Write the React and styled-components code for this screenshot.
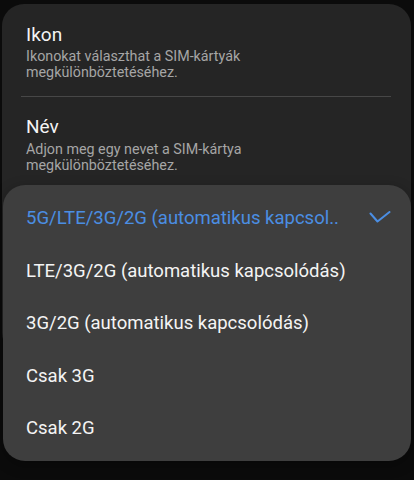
import React from 'react'
import styled, { createGlobalStyle } from 'styled-components'

const GlobalStyle = createGlobalStyle`
  html, body {
    margin: 0;
    padding: 0;
    background: #0b0b0b;
  }
  body {
    font-family: Roboto, "Noto Sans", sans-serif;
    -webkit-font-smoothing: antialiased;
  }
`

const Screen = styled.div`
  position: relative;
  width: 414px;
  height: 480px;
  overflow: hidden;
  padding-top: 4px;
  box-sizing: border-box;
`

const Card = styled.div`
  margin: 0 3px 0 2px;
  min-height: 351px;
  background: #252525;
  border-radius: 22px;
  box-sizing: border-box;
`

const Row = styled.div`
  padding: 18.5px 26px 15.5px 24px;
  display: flex;
  flex-direction: column;
  gap: 2.5px;
`

const Title = styled.div`
  color: #f4f4f4;
  font-size: 19px;
  line-height: 23px;
`

const Subtitle = styled.div`
  color: #a6a6a6;
  font-size: 14.3px;
  line-height: 16px;
`

const Divider = styled.div`
  height: 1px;
  margin: 0 20px 0 19px;
  background: #474747;
`

const Popup = styled.div`
  position: absolute;
  left: 3px;
  top: 185px;
  width: 408px;
  padding: 7px 0 6px;
  background: #3e3e3e;
  border-radius: 22px;
  box-sizing: border-box;
  box-shadow: 0 4px 14px rgba(0, 0, 0, 0.3);
`

const Option = styled.div`
  height: 52.5px;
  display: flex;
  align-items: center;
  justify-content: space-between;
  padding: 0 20px 0 23px;
  font-size: 18.5px;
  color: ${p => (p.selected ? '#4b8ee3' : '#f4f4f4')};
  white-space: nowrap;
`

const Check = styled.svg`
  width: 22px;
  height: 14px;
  flex: none;
`

const options = [
  '5G/LTE/3G/2G (automatikus kapcsol..',
  'LTE/3G/2G (automatikus kapcsolódás)',
  '3G/2G (automatikus kapcsolódás)',
  'Csak 3G',
  'Csak 2G',
]

export default function App() {
  return (
    <Screen>
      <GlobalStyle />
      <Card>
        <Row>
          <Title>Ikon</Title>
          <Subtitle>
            Ikonokat választhat a SIM-kártyák
            <br />
            megkülönböztetéséhez.
          </Subtitle>
        </Row>
        <Divider />
        <Row>
          <Title>Név</Title>
          <Subtitle>
            Adjon meg egy nevet a SIM-kártya
            <br />
            megkülönböztetéséhez.
          </Subtitle>
        </Row>
      </Card>
      <Popup>
        {options.map((o, i) => (
          <Option key={o} selected={i === 0}>
            <span>{o}</span>
            {i === 0 && (
              <Check viewBox="0 0 22 14">
                <path d="M1.5 2.5 L8.5 10.5 L20.5 1" fill="none" stroke="#4b8ee3" strokeWidth="2" strokeLinecap="round" strokeLinejoin="round" />
              </Check>
            )}
          </Option>
        ))}
      </Popup>
    </Screen>
  )
}
